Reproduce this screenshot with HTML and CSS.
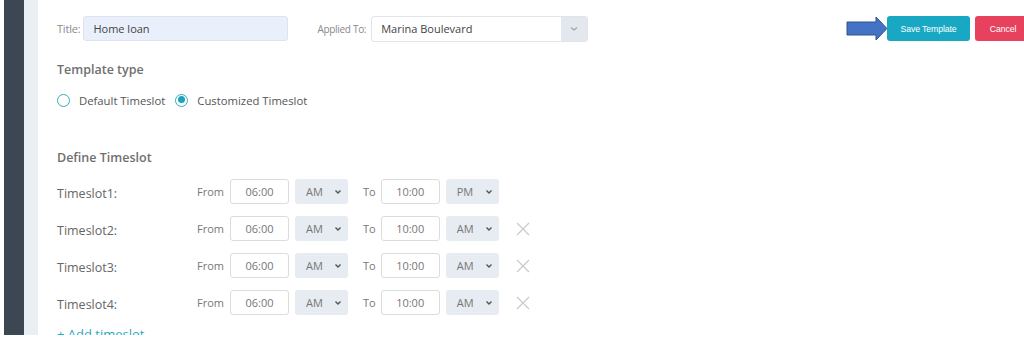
FILE: index.html
```html
<!DOCTYPE html>
<html>
<head>
<meta charset="utf-8">
<link rel="stylesheet" href="styles.css">
</head>
<body>
<div class="app">
  <div class="sidebar"></div>
  <div class="strip"></div>
  <div class="main">
    <div class="header">
      <span class="lbl">Title:</span>
      <div class="title-input">Home loan</div>
      <span class="lbl applied">Applied To:</span>
      <div class="select-big">
        <span class="sel-text">Marina Boulevard</span>
        <span class="sel-btn"><svg width="10" height="6" viewBox="0 0 10 6"><path d="M2 1.5 L5 4 L8 1.5" fill="none" stroke="#9aa3ad" stroke-width="1.2"/></svg></span>
      </div>
      <div class="actions">
        <svg class="arrow" width="42" height="27" viewBox="0 0 42 27"><path d="M1 6 H30 V1 L41 12.5 L30 24 V19 H1 Z" fill="#4472c4" stroke="#2f528f" stroke-width="1"/></svg>
        <button class="btn save">Save Template</button>
        <button class="btn cancel">Cancel</button>
      </div>
    </div>

    <div class="section-title">Template type</div>
    <div class="radios">
      <label class="radio"><span class="circle"></span>Default Timeslot</label>
      <label class="radio"><span class="circle checked"></span>Customized Timeslot</label>
    </div>

    <div class="section-title define">Define Timeslot</div>

    <div class="slots">
      <div class="slot">
        <span class="slot-name">Timeslot1:</span>
        <span class="word from">From</span>
        <div class="time">06:00</div>
        <div class="ampm">AM<svg width="8" height="6" viewBox="0 0 8 6"><path d="M1.5 1.5 L4 4 L6.5 1.5" fill="none" stroke="#555" stroke-width="1.4"/></svg></div>
        <span class="word to">To</span>
        <div class="time">10:00</div>
        <div class="ampm">PM<svg width="8" height="6" viewBox="0 0 8 6"><path d="M1.5 1.5 L4 4 L6.5 1.5" fill="none" stroke="#555" stroke-width="1.4"/></svg></div>
      </div>
      <div class="slot">
        <span class="slot-name">Timeslot2:</span>
        <span class="word from">From</span>
        <div class="time">06:00</div>
        <div class="ampm">AM<svg width="8" height="6" viewBox="0 0 8 6"><path d="M1.5 1.5 L4 4 L6.5 1.5" fill="none" stroke="#555" stroke-width="1.4"/></svg></div>
        <span class="word to">To</span>
        <div class="time">10:00</div>
        <div class="ampm">AM<svg width="8" height="6" viewBox="0 0 8 6"><path d="M1.5 1.5 L4 4 L6.5 1.5" fill="none" stroke="#555" stroke-width="1.4"/></svg></div>
        <svg class="remove" width="14" height="14" viewBox="0 0 14 14"><path d="M1 1 L13 13 M13 1 L1 13" stroke="#c8c8c8" stroke-width="1.1"/></svg>
      </div>
      <div class="slot">
        <span class="slot-name">Timeslot3:</span>
        <span class="word from">From</span>
        <div class="time">06:00</div>
        <div class="ampm">AM<svg width="8" height="6" viewBox="0 0 8 6"><path d="M1.5 1.5 L4 4 L6.5 1.5" fill="none" stroke="#555" stroke-width="1.4"/></svg></div>
        <span class="word to">To</span>
        <div class="time">10:00</div>
        <div class="ampm">AM<svg width="8" height="6" viewBox="0 0 8 6"><path d="M1.5 1.5 L4 4 L6.5 1.5" fill="none" stroke="#555" stroke-width="1.4"/></svg></div>
        <svg class="remove" width="14" height="14" viewBox="0 0 14 14"><path d="M1 1 L13 13 M13 1 L1 13" stroke="#c8c8c8" stroke-width="1.1"/></svg>
      </div>
      <div class="slot">
        <span class="slot-name">Timeslot4:</span>
        <span class="word from">From</span>
        <div class="time">06:00</div>
        <div class="ampm">AM<svg width="8" height="6" viewBox="0 0 8 6"><path d="M1.5 1.5 L4 4 L6.5 1.5" fill="none" stroke="#555" stroke-width="1.4"/></svg></div>
        <span class="word to">To</span>
        <div class="time">10:00</div>
        <div class="ampm">AM<svg width="8" height="6" viewBox="0 0 8 6"><path d="M1.5 1.5 L4 4 L6.5 1.5" fill="none" stroke="#555" stroke-width="1.4"/></svg></div>
        <svg class="remove" width="14" height="14" viewBox="0 0 14 14"><path d="M1 1 L13 13 M13 1 L1 13" stroke="#c8c8c8" stroke-width="1.1"/></svg>
      </div>
    </div>
    <div class="add">+ Add timeslot</div>
  </div>
</div>
</body>
</html>
```

FILE: styles.css
```css
* { box-sizing: border-box; }
html, body { margin: 0; padding: 0; background: #fff; }
body { font-family: "Open Sans", "Noto Sans", sans-serif; color: #666; }

.app {
  display: flex;
  height: 335px;
  overflow: hidden;
  padding-left: 4px;
  background: #fff;
}
.sidebar { width: 20px; flex: none; background: #3c4753; }
.strip { width: 14px; flex: none; background: #e9eff2; }
.main {
  flex: 1;
  min-width: 0;
  padding-left: 19px;
  padding-top: 16px;
}

.header {
  display: flex;
  align-items: center;
  height: 25px;
}
.lbl { font-size: 11px; color: #8a8a8a; letter-spacing: -0.2px; }
.title-input {
  margin-left: 3px;
  width: 205px;
  height: 25px;
  background: #e9f0fb;
  border: 1px solid #dde4ee;
  border-radius: 3px;
  padding-left: 9px;
  font-size: 11px;
  line-height: 23px;
  color: #444;
}
.applied { margin-left: 29px; font-size: 10px; letter-spacing: -0.3px; }
.select-big {
  margin-left: 5px;
  width: 217px;
  height: 26px;
  display: flex;
  border: 1px solid #e1e5ea;
  border-radius: 3px;
  overflow: hidden;
}
.sel-text {
  flex: 1;
  padding-left: 9px;
  font-size: 11px;
  line-height: 24px;
  color: #444;
}
.sel-btn {
  width: 26px;
  background: #e3e8ee;
  display: flex;
  align-items: center;
  justify-content: center;
}

.actions {
  margin-left: auto;
  display: flex;
  align-items: center;
  margin-right: -7px;
}
.arrow { display: block; margin-top: 1px; }
.btn {
  height: 25px;
  border: none;
  border-radius: 3px;
  color: #fff;
  font-family: "Liberation Sans", Arial, sans-serif;
  font-size: 8.7px;
  letter-spacing: -0.1px;
  padding: 0;
}
.save { width: 83px; background: #19a8c4; margin-left: -1px; }
.cancel { width: 56px; background: #e7415e; margin-left: 5px; }

.section-title {
  margin-top: 20px;
  font-size: 12.5px;
  font-weight: 600;
  line-height: 18px;
  color: #707070;
}
.radios {
  display: flex;
  align-items: center;
  margin-top: 12px;
  height: 18px;
  font-size: 11.3px;
  color: #555;
}
.radio { display: flex; align-items: center; margin-right: 10px; }
.circle {
  width: 13px;
  height: 13px;
  border: 1.5px solid #3aaab9;
  border-radius: 50%;
  margin-right: 9px;
  position: relative;
}
.circle.checked::after {
  content: "";
  position: absolute;
  left: 1.5px; top: 1.5px;
  width: 7px; height: 7px;
  border-radius: 50%;
  background: #1aa4c0;
}

.define { margin-top: 40px; }

.slots {
  margin-top: 12px;
  display: flex;
  flex-direction: column;
  gap: 12px;
}
.slot { display: flex; align-items: center; height: 25px; }
.slot-name { width: 140px; font-size: 12.5px; color: #666; padding-top: 3px; }
.word { font-size: 11px; color: #777; }
.from { margin-right: 6px; }
.to { margin-left: 15px; margin-right: 5px; }
.time {
  width: 59px;
  height: 25px;
  border: 1px solid #dcdcdc;
  border-radius: 3px;
  font-size: 11px;
  line-height: 23px;
  text-align: center;
  color: #777;
}
.ampm {
  width: 53px;
  height: 25px;
  margin-left: 6px;
  background: #e6ecf1;
  border-radius: 3px;
  display: flex;
  align-items: center;
  justify-content: space-between;
  padding: 0 6px 0 11px;
  font-size: 11px;
  color: #777;
}
.remove { margin-left: 17px; }

.add {
  margin-top: 10px;
  font-size: 13px;
  color: #29a9bd;
}
```
